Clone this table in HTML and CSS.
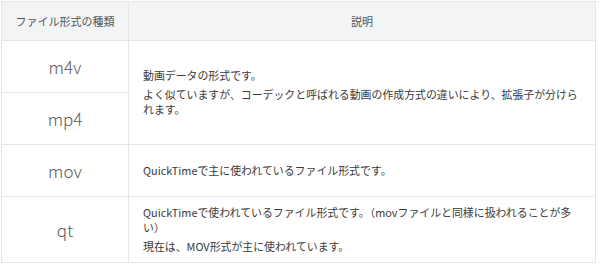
FILE: index.html
```html
<!DOCTYPE html>
<html lang="ja">
<head>
<meta charset="utf-8">
<title>ファイル形式の種類</title>
<link rel="stylesheet" href="styles.css">
</head>
<body>
<table class="formats">
  <colgroup>
    <col class="col-type">
    <col class="col-desc">
  </colgroup>
  <thead>
    <tr>
      <th>ファイル形式の種類</th>
      <th>説明</th>
    </tr>
  </thead>
  <tbody>
    <tr>
      <td class="ext">m4v</td>
      <td class="desc" rowspan="2">
        <p>動画データの形式です。</p>
        <p>よく似ていますが、コーデックと呼ばれる動画の作成方式の違いにより、拡張子が分けられます。</p>
      </td>
    </tr>
    <tr>
      <td class="ext">mp4</td>
    </tr>
    <tr>
      <td class="ext">mov</td>
      <td class="desc">
        <p>QuickTimeで主に使われているファイル形式です。</p>
      </td>
    </tr>
    <tr>
      <td class="ext">qt</td>
      <td class="desc">
        <p>QuickTimeで使われているファイル形式です。（movファイルと同様に扱われることが多い）</p>
        <p>現在は、MOV形式が主に使われています。</p>
      </td>
    </tr>
  </tbody>
</table>
</body>
</html>
```

FILE: styles.css
```css
html, body {
  margin: 0;
  padding: 0;
  background: #ffffff;
}

body {
  padding: 1px 0 0 1px;
  font-family: "Noto Sans CJK JP", "Noto Sans", sans-serif;
  color: #333333;
}

.formats {
  width: 595px;
  border-collapse: collapse;
  table-layout: fixed;
  border: 1px solid #e4e4e4;
}

.col-type {
  width: 127px;
}

.formats th,
.formats td {
  border: 1px solid #e6e6e6;
}

.formats th {
  background: #f3f4f5;
  font-weight: normal;
  font-size: 11px;
  line-height: 14px;
  padding: 12px 8px;
  color: #555555;
  text-align: center;
}

.ext {
  text-align: center;
  font-size: 17px;
  font-weight: 300;
  line-height: 25px;
  padding: 13px 8px;
  color: #5a5a5a;
}

.desc {
  font-size: 10.9px;
  line-height: 15px;
  padding: 8px 12px 8px 14px;
  vertical-align: middle;
  color: #3a3a3a;
}

.desc p {
  margin: 0;
}

.desc p + p {
  margin-top: 4px;
}
```
